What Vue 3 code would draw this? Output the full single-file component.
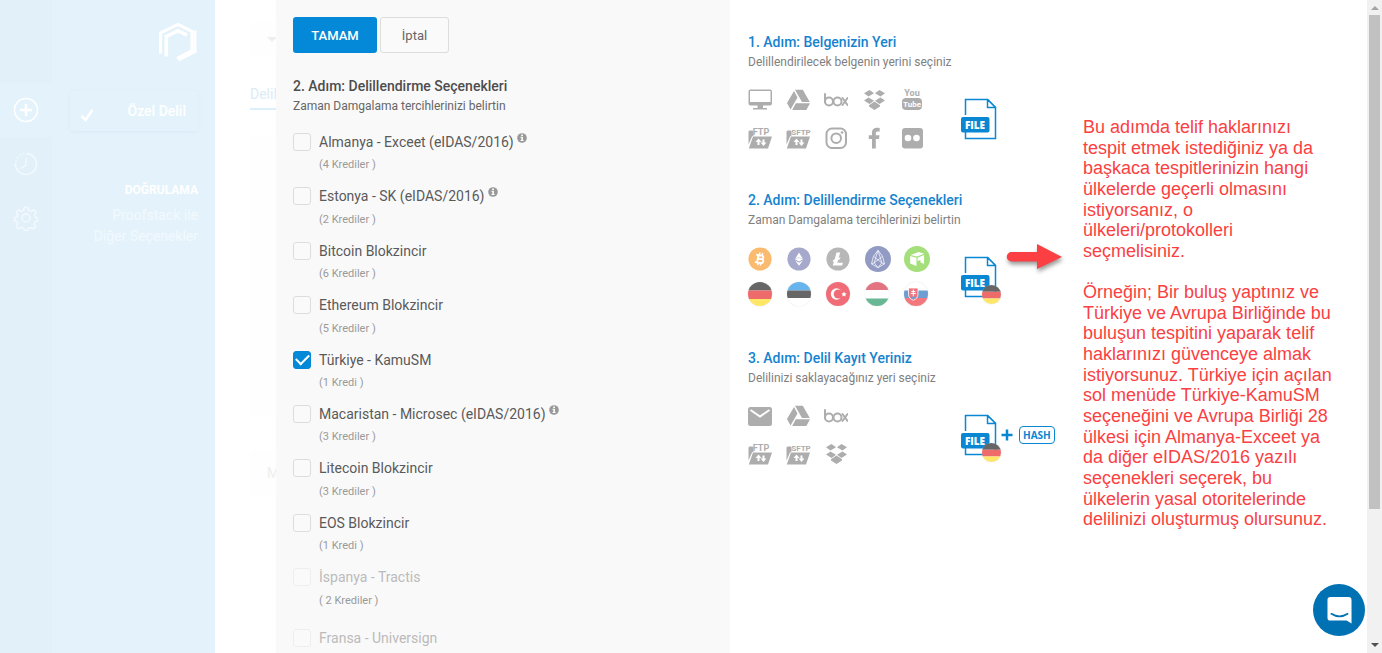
<script setup>
import { ref } from 'vue'

const options = ref([
  { id: 'de', name: 'Almanya - Exceet (eIDAS/2016)', credits: '(4 Krediler )', info: true, checked: false },
  { id: 'ee', name: 'Estonya - SK (eIDAS/2016)', credits: '(2 Krediler )', info: true, checked: false },
  { id: 'btc', name: 'Bitcoin Blokzincir', credits: '(6 Krediler )', checked: false },
  { id: 'eth', name: 'Ethereum Blokzincir', credits: '(5 Krediler )', checked: false },
  { id: 'tr', name: 'Türkiye - KamuSM', credits: '(1 Kredi )', checked: true },
  { id: 'hu', name: 'Macaristan - Microsec (eIDAS/2016)', credits: '(3 Krediler )', info: true, checked: false },
  { id: 'ltc', name: 'Litecoin Blokzincir', credits: '(3 Krediler )', checked: false },
  { id: 'eos', name: 'EOS Blokzincir', credits: '(1 Kredi )', checked: false },
  { id: 'es', name: 'İspanya - Tractis', credits: '( 2 Krediler )', checked: false, disabled: true },
  { id: 'fr', name: 'Fransa - Universign', credits: '( 2 Krediler )', checked: false, disabled: true },
])

const steps = [
  {
    title: '1. Adım: Belgenizin Yeri',
    text: 'Delillendirilecek belgenin yerini seçiniz',
    icons: ['monitor', 'drive', 'box', 'dropbox', 'youtube', 'ftp', 'sftp', 'instagram', 'facebook', 'flickr'],
  },
  {
    title: '2. Adım: Delillendirme Seçenekleri',
    text: 'Zaman Damgalama tercihlerinizi belirtin',
    icons: ['bitcoin', 'ethereum', 'litecoin', 'eos', 'neo', 'germany', 'estonia', 'turkey', 'hungary', 'slovakia'],
    coins: true,
    flag: true,
    arrow: true,
  },
  {
    title: '3. Adım: Delil Kayıt Yeriniz',
    text: 'Delilinizi saklayacağınız yeri seçiniz',
    icons: ['mail', 'drive', 'box', 'ftp', 'sftp', 'dropbox'],
    three: true,
    flag: true,
    hash: true,
  },
]

const shapes = { ftp: 'folder', sftp: 'folder' }

const captions = {
  youtube: [
    { text: 'You', x: 12, y: 8, size: 9 },
    { text: 'Tube', x: 12, y: 19, size: 8, light: true },
  ],
  ftp: [{ text: 'FTP', x: 13, y: 9, size: 9 }],
  sftp: [{ text: 'SFTP', x: 15, y: 9, size: 8 }],
}

const note = [
  `Bu adımda telif haklarınızı
tespit etmek istediğiniz ya da
başkaca tespitlerinizin hangi
ülkelerde geçerli olmasını
istiyorsanız, o
ülkeleri/protokolleri
seçmelisiniz.`,
  `Örneğin; Bir buluş yaptınız ve
Türkiye ve Avrupa Birliğinde bu
buluşun tespitini yaparak telif
haklarınızı güvenceye almak
istiyorsunuz. Türkiye için açılan
sol menüde Türkiye-KamuSM
seçeneğini ve Avrupa Birliği 28
ülkesi için Almanya-Exceet ya
da diğer eIDAS/2016 yazılı
seçenekleri seçerek, bu
ülkelerin yasal otoritelerinde
delilinizi oluşturmuş olursunuz.`,
]
</script>

<template>
  <div class="app">
    <svg class="sprite" aria-hidden="true">
      <symbol id="monitor" viewBox="0 0 24 24">
        <path fill="#adadad" fill-rule="evenodd" d="M2.5 1.5h19.5a2 2 0 0 1 2 2v12a2 2 0 0 1-2 2H2.5a2 2 0 0 1-2-2v-12a2 2 0 0 1 2-2zM2 3v11h20.500V3zM9.500 17.500h5.500v2.500h4v1.500H5v-1.500h4.500z" />
      </symbol>
      <symbol id="drive" viewBox="0 0 24 24">
        <path fill="#adadad" d="M8 3 1 15l3.500 6.500L11.500 9.500zM9.800 15.200 6.200 22h14.200l3.600-6.800zM23.800 14 16.800 1.800H9L16 14z" />
      </symbol>
      <symbol id="box" viewBox="0 0 24 24">
        <g fill="none" stroke="#adadad" stroke-width="2" stroke-linecap="round">
          <path d="M1 6v8" /><circle cx="5" cy="13.500" r="4" /><circle cx="13.500" cy="13.500" r="4" />
          <path d="m18.500 10 5 7M23.500 10l-5 7" />
        </g>
      </symbol>
      <symbol id="dropbox" viewBox="0 0 24 24">
        <path fill="#adadad" d="M7.500 2 12 5.200 6.500 8.500 2 5.200zM17.500 2 23 5.200 18.500 8.500 13 5.200zM6.500 9.500 12 12.700 7.500 16 2 12.500zM18.500 9.500 23 12.500 17.500 16 13 12.700zM7 17.200l5.500-3.700 5.500 3.700v1.300l-5.500 3.500L7 18.500z" />
      </symbol>
      <symbol id="youtube" viewBox="0 0 24 24">
        <rect x="2" y="10" width="20" height="12" rx="4" fill="#adadad" />
      </symbol>
      <symbol id="folder" viewBox="0 0 24 24">
        <path fill="#adadad" d="M.5 5.500 1.500 4.500H4.500l1 1V9.500L4 10.500 .5 18.500zM5 10.500h19L20 22.500H.8z" />
        <path fill="#fff" d="m10.500 12.500-3 3.500h2v3h2v-3h2zM15.500 20l3-3.500h-2v-3h-2v3h-2z" />
      </symbol>
      <symbol id="instagram" viewBox="0 0 24 24">
        <g fill="none" stroke="#adadad" stroke-width="2"><rect x="2.500" y="2.500" width="19.500" height="19.500" rx="5.500" /><circle cx="12.200" cy="12.200" r="4.800" /></g>
        <circle cx="18" cy="6.500" r="1.300" fill="#adadad" />
      </symbol>
      <symbol id="facebook" viewBox="0 0 24 24">
        <path fill="#adadad" d="M10 22.500V13H6.800V9.200H10V6.500C10 3.300 12 1.800 14.800 1.800c1.400 0 2.500.1 2.900.2v3.400h-2c-1.500 0-1.900.7-1.900 1.800v2h3.700L17 13h-3.200v9.500z" />
      </symbol>
      <symbol id="flickr" viewBox="0 0 24 24">
        <rect x="2" y="2" width="21" height="20.500" rx="3" fill="#adadad" /><circle cx="8" cy="12" r="3.300" fill="#fff" /><circle cx="16.500" cy="12" r="3.300" fill="#fff" />
      </symbol>
      <symbol id="mail" viewBox="0 0 24 24">
        <rect x="0" y="3" width="24" height="19" rx="2.500" fill="#adadad" /><path d="m2.500 6 9.500 6.500L21.500 6" fill="none" stroke="#fff" stroke-width="2" />
      </symbol>

      <symbol id="bitcoin" viewBox="0 0 24 24">
        <circle cx="12" cy="12" r="11.600" fill="#fabb70" />
        <g transform="rotate(10 12 12)" fill="none" stroke="#fff"><path d="M10.800 5.500v3M13.500 5.500v3M10.800 15.500v3M13.500 15.500v3" stroke-width="1.400" /><path d="M7.500 8.300h5.700a1.800 1.800 0 0 1 0 3.600h-3.200M9.800 8.300v7.500M7.500 15.800h6.200a1.900 1.900 0 0 0 0-3.900" stroke-width="1.900" /></g>
      </symbol>
      <symbol id="ethereum" viewBox="0 0 24 24">
        <circle cx="12" cy="12" r="11.600" fill="#a6a9cb" /><path fill="#fff" d="M12 5.500 16 12.200 12 14.500 8 12.200zM8.200 13.500l3.800 2.200 3.800-2.200L12 18.800z" /><path d="m8 12.200 4-1.700 4 1.700" stroke="#c9cbe0" fill="none" stroke-width=".7" />
      </symbol>
      <symbol id="litecoin" viewBox="0 0 24 24">
        <circle cx="12" cy="12" r="11.600" fill="#b7b7b7" /><path fill="#fff" d="M10.500 5.500h3.700l-1.500 5.400 1.800-.8-.6 2.100-1.800.9-.8 2.700h5.600l-.8 2.700H6.800l1.200-4-1.300.6.600-2.100 1.400-.7z" />
      </symbol>
      <symbol id="eos" viewBox="0 0 24 24">
        <circle cx="12" cy="12" r="12" fill="#929bc3" />
        <path d="M12 4 7.800 9.500 6 16.500 12 20l6-3.500-1.800-7zM12 4 8.500 15.500 12 20l3.500-4.500zM7.800 9.500l7.700 6 2.500 1M16.200 9.500l-7.700 6-2.500 1" stroke="#eef0f8" fill="none" stroke-width=".8" />
      </symbol>
      <symbol id="neo" viewBox="0 0 24 24">
        <circle cx="12" cy="12" r="12" fill="#a4df7b" /><path fill="#fff" d="m6 8.300 7.500-2.800 5 1.700-6.500 2.600zM5.700 9.200l5.800 1.700v7.600L5.700 16.200zM12.500 10.900l6-2.500v8.200l-3.300-1.500v-2.200l-2.700 1z" />
      </symbol>

      <symbol id="germany" viewBox="0 0 24 24">
        <path fill="#666" d="M0 0h24v8.500H0z" /><path fill="#ed6b6b" d="M0 8.500h24v8.500H0z" /><path fill="#fee766" d="M0 17h24v7H0z" />
      </symbol>
      <symbol id="estonia" viewBox="0 0 24 24">
        <path fill="#68b4ec" d="M0 0h24v8.500H0z" /><path fill="#666" d="M0 8.500h24v7.500H0z" /><path fill="#fff" d="M0 16h24v8H0z" />
      </symbol>
      <symbol id="turkey" viewBox="0 0 24 24">
        <path fill="#f06d78" d="M0 0h24v24H0z" /><circle cx="10.500" cy="12" r="5.700" fill="#fff" /><circle cx="12.300" cy="12" r="4.600" fill="#f06d78" /><path fill="#fff" d="m18 9.500.8 1.700 1.900.2-1.400 1.300.4 1.900-1.700-.9-1.700.9.400-1.900-1.400-1.300 1.900-.2z" />
      </symbol>
      <symbol id="hungary" viewBox="0 0 24 24">
        <path fill="#e27481" d="M0 0h24v8H0z" /><path fill="#fff" d="M0 8h24v8.500H0z" /><path fill="#69b795" d="M0 16.500h24V24H0z" />
      </symbol>
      <symbol id="slovakia" viewBox="0 0 24 24">
        <path fill="#fff" d="M0 0h24v8.500H0z" /><path fill="#6d9dd1" d="M0 8.500h24V16H0z" /><path fill="#f5777e" d="M0 16h24v8H0z" />
        <path fill="#ee7480" stroke="#fff" stroke-width=".8" d="M4.500 6h9.500v6.500c0 3-2 4.700-4.700 5.700-2.800-1-4.800-2.700-4.800-5.700z" /><path stroke="#fff" stroke-width="1" fill="none" d="M9.300 7.500v7M7.300 9.500h4M6.800 11.500h5" /><path fill="#6d9dd1" d="M6.500 15.500q2.800-2 5.500 0l-2.700 1.900z" />
      </symbol>
    </svg>

    <nav class="rail" aria-label="Ana menü">
      <a href="#" class="rail-item active" aria-label="Yeni">
        <svg viewBox="0 0 26 26"><circle cx="13" cy="13" r="11.500" fill="none" stroke="#fff" stroke-width="1.500" /><path d="M13 7v12M7 13h12" stroke="#fff" stroke-width="2.500" /></svg>
      </a>
      <a href="#" class="rail-item" aria-label="Geçmiş">
        <svg viewBox="0 0 26 26" fill="none" stroke="#f3f9fd" stroke-width="1.500"><path d="M13 2.500A10.500 10.500 0 1 1 2.500 12M13 7v7l-5 3.500" /><path d="M2.800 10.500A10.500 10.500 0 0 1 12 2.500" stroke-dasharray="1.500 2" /></svg>
      </a>
      <a href="#" class="rail-item" aria-label="Ayarlar">
        <svg viewBox="0 0 26 26" fill="none" stroke="#f3f9fd" stroke-width="1.500" stroke-linejoin="round"><circle cx="13" cy="13" r="4" /><path d="M11 2.500h4l.8 3 2.200.9 2.700-1.500 2.400 2.400-1.500 2.700.9 2.200 2 .8v3l-2.500.8-.8 2 1.500 2.800-2.400 2.400-2.700-1.500-2.200.9-.9 2h-3l-.9-2.200-2.200-.8-2.700 1.500-2.400-2.400 1.500-2.700-.9-2.200-2.400-.8v-3l2.500-.9.800-2-1.500-2.700 2.400-2.400 2.700 1.500 2.200-.9z" /></svg>
      </a>
    </nav>

    <aside class="sidebar">
      <svg class="logo" viewBox="0 0 40 40" aria-label="Logo">
        <g fill="none" stroke="#fff">
          <path stroke-width="3" d="M2.500 31.500V11L20 2.500 34 9.500V28.500L19 36.500" />
          <path stroke-width="3.600" d="M8.300 34.500V14.500L20 8.700l9 4.500" />
          <path stroke-width="3" d="M37 8.500V29.500L20.500 38" />
        </g>
      </svg>
      <button type="button" class="proof">
        <svg viewBox="0 0 14 14"><path d="m1.500 8 4 4L12.500 2" fill="none" stroke="#fff" stroke-width="2.500" /></svg>
        <span>Özel Delil</span>
      </button>
      <h2>DOĞRULAMA</h2>
      <a href="#">Proofstack ile<br>Diğer Seçenekler</a>
    </aside>

    <div class="page">
      <div class="picker"><span class="caret"></span></div>
      <div class="tab">Delil</div>
      <div class="card"></div>
      <div class="message">M</div>
    </div>

    <form class="panel" @submit.prevent>
      <div class="actions">
        <button type="submit" class="ok">TAMAM</button>
        <button type="button" class="cancel">İptal</button>
      </div>
      <h1>2. Adım: Delillendirme Seçenekleri</h1>
      <p class="sub">Zaman Damgalama tercihlerinizi belirtin</p>
      <ul>
        <li v-for="o in options" :key="o.id" :class="{ disabled: o.disabled }">
          <input :id="o.id" v-model="o.checked" type="checkbox" :disabled="o.disabled">
          <label :for="o.id">
            <span class="name">{{ o.name }}
              <svg v-if="o.info" class="info" viewBox="0 0 10 10"><circle cx="5" cy="5" r="4.800" fill="#999" /><path fill="#fff" d="M4.200 1.500h1.700V3H4.200zM3.500 3.800h2.400V7h.7v1H3.500V7h.8V4.800h-.8z" /></svg>
            </span>
            <span class="credits">{{ o.credits }}</span>
          </label>
        </li>
      </ul>
    </form>

    <main class="guide">
      <div class="steps">
        <section v-for="s in steps" :key="s.title">
          <h2>{{ s.title }}</h2>
          <p>{{ s.text }}</p>
          <div class="step-body">
            <div class="icons" :class="{ coins: s.coins, three: s.three }">
              <svg v-for="(icon, i) in s.icons" :key="i" :class="icon" viewBox="0 0 24 24">
                <use :href="'#' + (shapes[icon] || icon)" width="24" height="24" />
                <text v-for="c in captions[icon]" :key="c.text" :x="c.x" :y="c.y" :font-size="c.size" class="glyph" :class="{ light: c.light }">{{ c.text }}</text>
              </svg>
            </div>
            <div class="result">
              <span class="file">
                <svg viewBox="0 0 36 42">
                  <path d="M4.500 17V1.500h22l8 8V40.500h-30V33" fill="none" stroke="#0a87d3" stroke-width="1.500" />
                  <path d="M26.500 1.500v8h8z" fill="#fff" stroke="#0a87d3" stroke-width="1.500" stroke-linejoin="round" />
                  <rect y="19" width="28.500" height="15.500" rx="2" fill="#0a87d3" />
                  <text x="14" y="30.500" fill="#fff" class="file-text">FILE</text>
                </svg>
                <svg v-if="s.flag" class="badge germany"><use href="#germany" /></svg>
              </span>
              <template v-if="s.hash">
                <svg class="plus" viewBox="0 0 12 12"><path d="M6 .5v11M.5 6h11" stroke="#0a87d3" stroke-width="2.500" /></svg>
                <span class="hash">HASH</span>
              </template>
              <svg v-if="s.arrow" class="arrow" viewBox="0 0 60 34">
                <path d="M5.500 11H31V3l25 13-25 12v-7.500H5.500a4.700 4.700 0 0 1 0-9.500z" fill="#fb3f42" />
              </svg>
            </div>
          </div>
        </section>
      </div>
      <div class="note">
        <p v-for="n in note" :key="n">{{ n }}</p>
      </div>
      <button type="button" class="chat" aria-label="Sohbet">
        <svg viewBox="0 0 26 28"><path fill="#fff" d="M3.500.5h19a3 3 0 0 1 3 3V28l-5-3h-17a3 3 0 0 1-3-3V3.500a3 3 0 0 1 3-3z" /><path d="M4.500 18q8.500 5.500 17 0" fill="none" stroke="#0071b2" stroke-width="1.800" stroke-linecap="round" /></svg>
      </button>
    </main>

    <div class="scrollbar" aria-hidden="true">
      <span class="up"></span>
      <span class="thumb"></span>
      <span class="down"></span>
    </div>
  </div>
</template>

<style>
body { margin: 0; }
</style>

<style scoped>
* { box-sizing: border-box; }
h1, h2, p, ul { margin: 0; padding: 0; }
button { font: inherit; cursor: pointer; }
svg { display: block; flex: none; }
a { text-decoration: none; }

.app {
  display: flex;
  height: 100vh;
  overflow: hidden;
  background: #fff;
  font-family: Roboto, "Liberation Sans", sans-serif;
  font-size: 14px;
  color: #555;
}
.sprite { position: absolute; width: 0; height: 0; }
.glyph { font-family: Roboto, sans-serif; font-weight: 700; fill: #adadad; text-anchor: middle; }
.glyph.light { fill: #fff; }
.file-text { font: 800 10px "Open Sans", sans-serif; text-anchor: middle; }

.rail { flex: 0 0 52px; padding-top: 83px; background: #e2f0f9; }
.rail-item { display: flex; align-items: center; justify-content: center; height: 54px; }
.rail-item svg { width: 26px; height: 26px; }
.rail-item.active { background: #e4f3fb; }

.sidebar {
  flex: 0 0 163px;
  display: flex;
  flex-direction: column;
  align-items: flex-end;
  padding: 22px 17px 0 18px;
  background: #e4f3fb;
  text-align: right;
}
.logo { width: 40px; height: 40px; }
.proof {
  display: flex;
  align-items: center;
  justify-content: space-between;
  width: 100%;
  height: 40px;
  margin: 29px 0 50px;
  padding: 0 12px 0 10px;
  border: 0;
  border-radius: 3px;
  background: #e4f3fb;
  box-shadow: 0 1px 4px #d9e9f5;
  color: #fff;
  font-weight: 500;
}
.proof svg { width: 14px; height: 14px; margin-top: 8px; }
.sidebar h2 { font-size: 12px; line-height: 18px; font-weight: 700; color: #fff; }
.sidebar a { margin-top: 6px; line-height: 21px; color: #f2f9fd; }

.page { flex: 0 0 61px; padding: 22px 0 0 35px; overflow: hidden; white-space: nowrap; }
.picker { display: flex; align-items: center; width: 200px; height: 34px; padding-left: 17px; background: #fefefe; }
.caret { border: 5px solid transparent; border-top-color: #eee; border-bottom: 0; }
.tab { width: 200px; height: 32px; margin-top: 22px; padding-top: 4px; line-height: 24px; border-bottom: 2px solid #dceffa; color: #dcebf6; }
.card { width: 200px; height: 280px; margin-top: 25px; background: #fefefe; }
.message { margin-top: 36px; padding-left: 17px; line-height: 44px; background: #fefefe; color: #eee; }

.panel { flex: 0 1 454px; padding: 17px 17px 0; background: #f9f9f9; overflow: hidden; }
.actions { display: flex; gap: 3px; margin-bottom: 23px; }
.actions button { height: 36px; padding: 0; border-radius: 3px; font-size: 13px; }
.ok { width: 84px; border: 0; background: #0389d7; color: #fff; font-weight: 500; }
.actions .cancel { width: 69px; border: 1px solid #ddd; background: #fafafa; color: #666; }
h1 { font-size: 14px; line-height: 20px; font-weight: 500; color: #4d4d4d; }
.sub { font-size: 12px; line-height: 21px; color: #666; }
ul { margin-top: 14px; list-style: none; }
li { display: flex; gap: 8px; padding-bottom: 8px; }
input {
  flex: none;
  display: flex;
  align-items: center;
  justify-content: center;
  appearance: none;
  width: 18px;
  height: 18px;
  margin: 2px 0 0;
  border: 1px solid #ddd;
  border-radius: 3px;
  background: #fafafa;
}
input:checked { border-color: #0389d7; background: #0389d7; }
input:checked::before {
  content: "";
  width: 11px;
  height: 6px;
  margin-bottom: 4px;
  border: solid #fff;
  border-width: 0 0 2px 2px;
  transform: rotate(-45deg);
}
.name { display: flex; gap: 3px; line-height: 1.6; color: #5a5a5a; }
.info { width: 10px; height: 10px; margin-top: 2px; }
.credits { display: block; font-size: 11px; line-height: 24px; color: #999; }
.disabled { padding-bottom: 14px; }
.disabled .name { color: #bbb; }
.disabled input { border-color: #eee; }

.guide { position: relative; flex: 1 1 0; min-width: 0; display: flex; padding: 32px 24px 0 18px; }
.steps { flex: 0 0 335px; }
section { height: 158px; }
section h2 { font-size: 14px; line-height: 20px; font-weight: 500; color: #1583cf; }
section p { font-size: 12px; line-height: 20px; color: #808080; }
.step-body { display: flex; align-items: flex-start; margin-top: 16px; }
.icons { display: grid; grid-template-columns: repeat(5, 38px); grid-auto-rows: 38px; width: 213px; }
.icons.three { grid-template-columns: repeat(3, 38px); }
.icons.coins { grid-template-columns: repeat(5, 39px); grid-auto-rows: 35px; margin-top: 1px; }
.icons svg { width: 24px; height: 24px; overflow: visible; }
.icons .eos, .icons .neo { width: 26px; height: 26px; margin-top: -1px; }
.germany, .estonia, .turkey, .hungary, .slovakia { border-radius: 50%; box-shadow: 0 0 1px #bbb; }
.icons .germany, .icons .estonia, .icons .turkey, .icons .hungary, .icons .slovakia { overflow: hidden; }
.result { position: relative; display: flex; align-items: center; padding-top: 10px; }
.file { position: relative; }
.file svg { width: 36px; height: 42px; }
.file .badge { position: absolute; right: -4px; bottom: -6px; width: 19px; height: 19px; }
.plus { width: 12px; height: 12px; margin: 0 6px 0 4px; }
.hash { padding: 0 3px; border: 1px solid #0a87d3; border-radius: 4px; font: 700 10px/16px "Open Sans", sans-serif; color: #0a87d3; }
.arrow { position: absolute; left: 45px; top: -5px; width: 60px; height: 34px; filter: drop-shadow(1px 3px 2px #999); }

.note { flex: 1 1 0; padding-top: 85px; font-family: "Liberation Sans", Arial, sans-serif; font-size: 18px; line-height: 1.15; color: #fb3f42; white-space: pre; }
.note p + p { margin-top: 20px; }

.chat {
  position: absolute;
  right: 2px;
  bottom: 17px;
  display: flex;
  align-items: center;
  justify-content: center;
  width: 52px;
  height: 52px;
  padding: 0;
  border: 0;
  border-radius: 50%;
  background: #0071b2;
}
.chat svg { width: 25px; height: 28px; }

.scrollbar { flex: 0 0 15px; display: flex; flex-direction: column; align-items: center; padding: 6px 0; background: #f1f1f1; }
.thumb { width: 11px; height: 77%; margin: 5px 0 auto; background: #c1c1c1; }
.up, .down { border: 4px solid transparent; }
.up { border-top: 0; border-bottom-color: #a3a3a3; }
.down { border-bottom: 0; border-top-color: #505050; }
</style>
